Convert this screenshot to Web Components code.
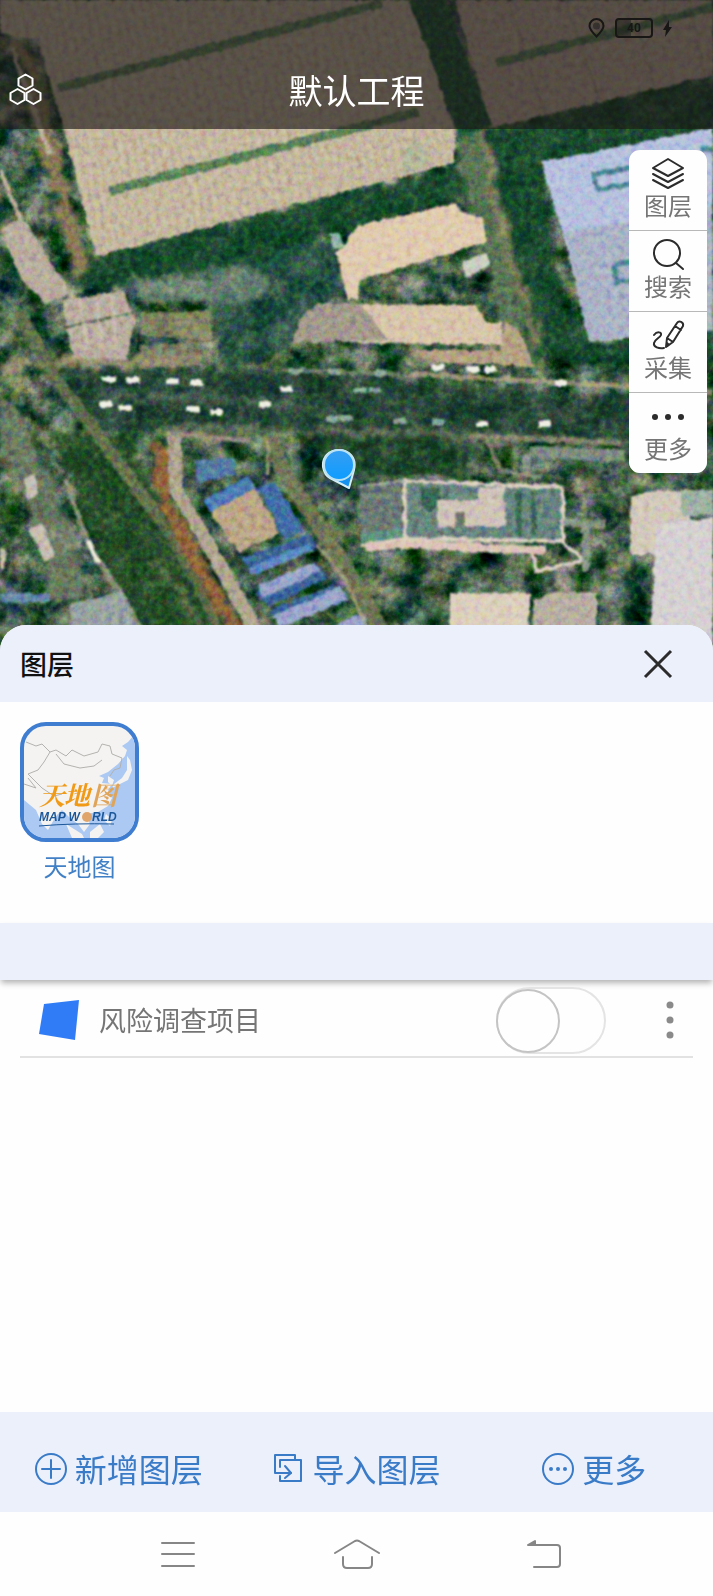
<!DOCTYPE html>
<html lang="zh-CN">
<head>
<meta charset="utf-8">
<meta name="viewport" content="width=device-width, initial-scale=1">
<title>默认工程</title>
<style>
    body {
        margin: 0;
        font-family: "Noto Sans CJK SC", "Noto Sans", sans-serif;
        background: #fefefe;
        color: #757575;
    }
</style>
</head>
<body>
<survey-app>
    <map-view slot="map">
        <title-bar slot="bar">默认工程</title-bar>
        <tool-rail slot="tools">
            <tool-button icon="layers">图层</tool-button>
            <tool-button icon="search">搜索</tool-button>
            <tool-button icon="collect">采集</tool-button>
            <tool-button icon="more">更多</tool-button>
        </tool-rail>
    </map-view>
    <layer-sheet heading="图层">
        <base-map slot="base">天地图</base-map>
        <layer-row>风险调查项目</layer-row>
        <sheet-action slot="actions" icon="add">新增图层</sheet-action>
        <sheet-action slot="actions" icon="import">导入图层</sheet-action>
        <sheet-action slot="actions" icon="dots">更多</sheet-action>
    </layer-sheet>
    <system-nav slot="nav"></system-nav>
</survey-app>

<script>
const resetButton = `
    button {
        margin: 0;
        padding: 0;
        border: 0;
        background: none;
        font: inherit;
        color: inherit;
        cursor: pointer;
    }
    svg { display: block; }
`;

const icons = {
    layers: `<path d="M16 2 31 11 16 19 1 11Z M1 17l15 8 15-8 M1 23l15 8 15-8"/>`,
    search: `<circle cx="15" cy="15" r="13"/><path d="M24 25l7 6"/>`,
    collect: `<path d="M25 4 15 19l-1 9 7-5L31 7c1-4-4-6-6-3Z M23 7l6 4 M15 19l6 4 M14 28l1-4 2 2Z"/>
              <path d="M2 16c3-4 8-3 7 0-1 3-6 4-7 8-1 4 5 6 10 5"/>`,
    more: `<g fill="currentColor" stroke="none"><circle cx="3" cy="17" r="3"/><circle cx="16" cy="17" r="3"/><circle cx="29" cy="17" r="3"/></g>`,
    add: `<circle cx="16" cy="16" r="15"/><path d="M16 7v18M7 16h18"/>`,
    import: `<path d="M23 7V2H3v18h16 M8 14V7h21v21H8v-5"/><path d="M13 13l6 7-6 5"/>`,
    dots: `<circle cx="16" cy="16" r="15"/><g fill="currentColor" stroke="none"><circle cx="9" cy="16" r="2"/><circle cx="16" cy="16" r="2"/><circle cx="23" cy="16" r="2"/></g>`
};

function icon(name, width) {
    return `<svg width="32" height="32" viewBox="0 0 32 32" fill="none" stroke="currentColor"
        stroke-width="${width}" stroke-linejoin="round" stroke-linecap="round" overflow="visible" aria-hidden="true">${icons[name]}</svg>`;
}

class SurveyApp extends HTMLElement {
    constructor() {
        super();
        this.attachShadow({ mode: 'open' });
        this.shadowRoot.innerHTML = `
            <style>
                :host {
                    display: flex;
                    flex-direction: column;
                    min-height: 100vh;
                }
            </style>
            <slot name="map"></slot>
            <slot></slot>
            <slot name="nav"></slot>
        `;
    }
}

// cars on the main road: x, y
const cars = [[109, 379], [133, 380], [172, 381], [196, 383], [286, 389], [125, 408], [193, 409], [105, 404],
    [264, 404], [216, 412], [437, 367], [473, 369], [490, 369], [482, 424], [544, 424], [560, 383]];
const dimCars = [[360, 390], [374, 390], [438, 422], [345, 418], [332, 419], [400, 421], [380, 373], [334, 372], [296, 371]];

class MapView extends HTMLElement {
    constructor() {
        super();
        this.attachShadow({ mode: 'open' });
        const carRects = (list) => list.map(([x, y]) => `<rect x="${x - 6}" y="${y - 3}" width="13" height="6" rx="2"/>`).join('');
        this.shadowRoot.innerHTML = `
            <style>
                :host {
                    display: grid;
                    background: #23533a;
                    overflow: hidden;
                }
                /* imagery and controls share one grid cell */
                .imagery, .controls { grid-area: 1 / 1; min-width: 0; }
                .imagery {
                    display: block;
                    width: 100%;
                    height: 100%;
                    min-height: 650px;
                    contain: size;
                    color-interpolation-filters: sRGB;
                }
                .controls { position: relative; }
                .tools { display: flex; justify-content: flex-end; padding: 21px 6px 177px; }
                .pin { position: absolute; left: 45%; top: 448px; }
            </style>
            <svg class="imagery" viewBox="0 0 713 650" preserveAspectRatio="xMidYMin slice" role="img" aria-label="卫星影像">
                <defs>
                    <filter id="rough" x="0" y="0" width="100%" height="100%">
                        <feTurbulence type="fractalNoise" baseFrequency="0.12" numOctaves="3" seed="4"/>
                        <feDisplacementMap in="SourceGraphic" scale="5" xChannelSelector="R" yChannelSelector="G"/>
                        <feGaussianBlur stdDeviation="1"/>
                    </filter>
                    <filter id="ragged" x="0" y="0" width="100%" height="100%">
                        <feTurbulence type="fractalNoise" baseFrequency="0.06" numOctaves="4" seed="9"/>
                        <feDisplacementMap in="SourceGraphic" scale="22" xChannelSelector="R" yChannelSelector="G"/>
                        <feGaussianBlur stdDeviation="2"/>
                    </filter>
                    <filter id="trees" x="0" y="0" width="100%" height="100%">
                        <feTurbulence type="fractalNoise" baseFrequency="0.04" numOctaves="5" seed="11"/>
                        <feColorMatrix values="1.1 0 0 0 -0.3  0.8 0.2 0 0 -0.14  0.8 0 0.3 0 -0.28  0 0 0 0 1"/>
                    </filter>
                    <filter id="grain" x="0" y="0" width="100%" height="100%">
                        <feTurbulence type="fractalNoise" baseFrequency="0.16" numOctaves="3" seed="7"/>
                        <feColorMatrix values="1.5 0.3 0 0 -0.4  0.3 1.5 0 0 -0.4  0.3 0 1.5 0 -0.4  0 0 0 0 1"/>
                    </filter>
                    <pattern id="ribs" width="9" height="30" patternUnits="userSpaceOnUse" patternTransform="rotate(-12)">
                        <rect width="9" height="30" fill="#c7baa3"/>
                        <rect width="3" height="30" fill="#bfb198"/>
                    </pattern>
                </defs>
                <rect width="713" height="650" filter="url(#trees)"/>
                <g filter="url(#ragged)">
                    <path fill="#0f4527" opacity=".8" d="M70 262 96 256 455 165 475 195 320 238 290 265 80 290Z M490 128 713 75V140L541 162 560 300 590 345 713 330V370L530 360 510 260Z"/>
                    <path fill="#1d4f45" opacity=".6" d="M215 300 290 240 335 240 340 290 290 350 225 370Z"/>
                    <path fill="#7e9585" opacity=".6" d="M130 280 240 262 270 280 260 300 150 304Z"/>
                    <path fill="#1d3f31" opacity=".7" d="M60 368 290 372 713 405V450L400 434 90 430Z"/>
                    <path fill="#163d22" opacity=".7" d="M300 434H470V475H340Z"/>
                    <path fill="#1f4a22" opacity=".8" d="M50 430 130 436 180 560 235 650H160L95 550Z"/>
                    <path fill="none" stroke="#78836a" stroke-width="34" opacity=".8" d="M0 405 32 480 60 550 70 600"/>
                    <path fill="none" stroke="#8b7b57" stroke-width="15" d="M20 40 50 150 82 270"/>
                    <path fill="none" stroke="#5b7655" stroke-width="24" opacity=".9" d="M468 120 484 220 525 370"/>
                    <path fill="none" stroke="#8d8764" stroke-width="8" opacity=".8" d="M482 130 502 235 540 350"/>
                    <path fill="none" stroke="#ab9a78" stroke-width="10" opacity=".8" d="M0 365 65 362 215 358"/>
                    <path fill="none" stroke="#67766c" stroke-width="8" opacity=".5" d="M90 394 300 404"/>
                    <path fill="none" stroke="#7d8468" stroke-width="5" opacity=".7" d="M160 427 460 434 713 446"/>
                    <path fill="none" stroke="#92653a" stroke-width="16" d="M158 441 166 504 199 567 248 650"/>
                    <path fill="none" stroke="#6f7a4f" stroke-width="10" opacity=".7" d="M150 560 180 590 214 650"/>
                </g>
                <g filter="url(#rough)">
                    <path fill="url(#ribs)" d="M0 0H411L455 130V163L96 256 64 130 38 40 0 34Z"/>
                    <path fill="#a9b596" opacity=".6" d="M400 150 420 140 430 165 405 172Z"/>
                    <path fill="#bcab98" d="M455 0H713V75L490 128Z"/>
                    <path stroke="#a39584" stroke-width="2" d="M510 5 545 115M565 0 600 100M630 0 655 88M690 0 704 75"/>
                    <path stroke="#4f7d52" stroke-width="9" opacity=".9" d="M59 88 382 3M109 191 418 112M496 63 713 7"/>
                    <path stroke="#185030" stroke-width="34" d="M425-5 476 132"/>
                    <path fill="none" stroke="#bdb29d" stroke-width="5" d="M12 48 50 155M0 170 30 240 75 300"/>
                    <path fill="#b9ad9f" d="M0 228 23 218 70 292 46 304 20 278Z"/>
                    <path fill="#b9ac9f" d="M62 300 123 291 135 318 127 360 73 358 65 320Z"/>
                    <path stroke="#456044" stroke-width="2" d="M64 328 134 312"/>
                    <path stroke="#cdc3b5" stroke-width="4" opacity=".7" d="M80 300 88 350M96 297 102 350M112 295 116 350"/>
                    <path fill="#93906c" opacity=".8" d="M140 313 210 310 212 340 140 336Z"/>
                    <path fill="#a1957c" opacity=".6" d="M140 345 200 342 204 366 140 368Z"/>
                    <path fill="#e0cbb0" d="M336 253 345 244 356 226 455 203 462 213 482 217 487 242 360 280 358 300 348 300Z"/>
                    <path fill="#8fb6ac" d="M328 234 338 232 344 246 334 250Z"/>
                    <path fill="#d8c5ab" d="M345 304 477 305 486 322 502 322 502 345 350 343Z"/>
                    <path fill="#a39a8c" d="M318 303 360 303 388 340 291 343 300 318Z"/>
                    <path fill="#b5a283" d="M410 350 500 350 504 322 520 330 534 367 430 362Z"/>
                    <path fill="#cbcfc2" d="M462 262 484 253 490 264 466 277Z"/>
                    <path fill="#b6c1de" d="M541 162 713 128V330L589 342 565 240Z"/>
                    <path fill="#abb3c6" d="M565 232 713 207V330L589 342Z"/>
                    <path fill="none" stroke="#4c8793" stroke-width="5" d="M592 175 640 166M597 190 640 182M594 175 597 190M615 265 640 260M614 265 617 282 640 278M701 150 713 148"/>
                    <path fill="none" stroke="#b1a385" stroke-width="5" opacity=".8" d="M410 374 550 382 713 392"/>
                    <path fill="none" stroke="#8b9482" stroke-width="4" opacity=".7" d="M280 370 400 374"/>

                    <path fill="none" stroke="#66734f" stroke-width="13" opacity=".9" d="M18 310 52 375 95 430 160 520"/>
                    <path fill="none" stroke="#67744e" stroke-width="9" opacity=".7" d="M95 430 160 520 200 590 228 650"/>
                    <path fill="none" stroke="#92927a" stroke-width="5" opacity=".9" d="M66 480 88 545 122 595 152 650"/>
                    <path fill="none" stroke="#b0a690" stroke-width="14" d="M174 432 176 490 209 545 266 650"/>
                    <path fill="none" stroke="#9a907b" stroke-width="5" d="M170 433 250 441"/>
                    <path fill="#547da3" d="M195 460 235 458 237 475 197 482Z"/>
                    <path fill="#4c7bb7" d="M203 500 248 476 260 492 210 512Z"/>
                    <path fill="#406fa8" d="M258 487 275 482 304 530 285 540Z"/>
                    <path fill="#bca688" d="M210 512 255 488 281 533 240 552 228 538Z"/>
                    <path fill="#3a6499" d="M242 558 308 534 317 546 252 575Z M256 593 320 567 328 578 268 607Z M270 610 335 584 346 600 280 626Z"/>
                    <path fill="#5c8ac3" d="M248 568 308 544 313 550 252 576Z"/>
                    <path fill="#9ba6cb" d="M258 586 314 562 320 571 264 598Z M272 616 340 586 348 600 280 628Z M325 630 365 612 375 650 330 650Z"/>
                    <path fill="none" stroke="#747a57" stroke-width="15" opacity=".9" d="M270 436 282 470 325 535 360 590 392 650"/>
                    <path fill="none" stroke="#aea384" stroke-width="4" opacity=".8" d="M267 440 268 475M318 545 345 580 378 650"/>

                    <path fill="#6c7b75" d="M360 487 403 482V535L360 544Z"/>
                    <path fill="#5f9480" d="M360 535 403 527V538L360 545Z"/>
                    <path fill="#68857f" d="M405 482 562 487V540H405Z"/>
                    <path fill="#2d6247" opacity=".8" d="M420 488H440V500L430 515 422 505Z M515 492 517 535H522V490Z M530 492 532 535H536V492Z"/>
                    <path fill="#cfc3b8" d="M437 500H505V527H437Z M478 488 506 487 502 500H478Z"/>
                    <path fill="#6f7468" d="M456 512H464V527H454Z"/>
                    <path fill="none" stroke="#dccfc2" stroke-width="4" d="M405 481 563 487V541L405 539ZM405 539 360 546M562 542 584 560 536 571 533 555"/>
                    <path fill="none" stroke="#a9b0a2" stroke-width="2" d="M360 486 405 481"/>
                    <path fill="none" stroke="#dcc5b8" stroke-width="9" d="M365 547 405 544 545 551"/>
                    <path fill="none" stroke="#8d9b8b" stroke-width="8" opacity=".9" d="M563 522 605 524M586 525V572M526 476V455"/>
                    <path fill="none" stroke="#8f9a90" stroke-width="12" opacity=".8" d="M530 452 625 456"/>
                    <path fill="none" stroke="#a49880" stroke-width="5" opacity=".7" d="M470 436 620 443M487 440 500 470 540 478"/>
                    <path fill="#dccfbd" d="M450 593H530V650H450Z"/>
                    <path fill="#b8afa2" d="M533 600 555 592 597 592V650H533Z"/>
                    <path fill="#d3c9bb" d="M630 497 655 490 690 492V555H630Z"/>
                    <path fill="#d6d1d2" d="M656 524 713 518V650H650Z"/>
                    <path fill="#9fb3a4" d="M680 490H713V515L682 516Z"/>
                    <path fill="#97a2a1" d="M70 605 122 590 142 640H72Z"/>
                    <path fill="#6689a8" d="M0 593 50 594V602L0 603Z"/>
                    <path fill="#c7bdb2" d="M24 480 34 474 38 495 28 500Z M28 530 42 522 55 556 45 562Z M0 548 6 550 5 570H0Z"/>
                    <path fill="none" stroke="#eee9dd" stroke-width="5" d="M88 540 98 562"/>
                    <g fill="#eeeee2">${carRects(cars)}</g>
                    <g fill="#8fa99a">${carRects(dimCars)}</g>
                </g>
                <rect width="713" height="650" filter="url(#grain)" opacity=".5" style="mix-blend-mode: soft-light"/>
            </svg>
            <div class="controls">
                <slot name="bar"></slot>
                <div class="tools"><slot name="tools"></slot></div>
                <svg class="pin" width="36" height="42" viewBox="0 0 36 42" role="img" aria-label="当前位置">
                    <defs><linearGradient id="sky" x2="0" y2="1"><stop stop-color="#379df2"/><stop offset="1" stop-color="#0d9dff"/></linearGradient></defs>
                    <path fill="#1691ee" stroke="#d5edf5" stroke-width="2" stroke-linejoin="round" d="M9 30 28 40 33 22C36 10 28 2 18 2 8 2 1 9 2 19c1 5 3 9 7 11Z"/>
                    <circle cx="18" cy="17" r="15" fill="url(#sky)" stroke="#b9e2f5" stroke-width="2"/>
                </svg>
            </div>
        `;
    }
}

class TitleBar extends HTMLElement {
    constructor() {
        super();
        this.attachShadow({ mode: 'open' });
        this.shadowRoot.innerHTML = `
            <style>
                ${resetButton}
                :host {
                    display: block;
                    background: rgba(28, 24, 22, .64);
                    color: #fff;
                }
                .status {
                    display: flex;
                    justify-content: flex-end;
                    align-items: center;
                    gap: 10px;
                    height: 56px;
                    padding-right: 41px;
                    box-sizing: border-box;
                    color: #181715;
                }
                .battery {
                    display: flex;
                    align-items: center;
                    justify-content: center;
                    width: 38px;
                    height: 20px;
                    box-sizing: border-box;
                    border: 2px solid;
                    border-radius: 4px;
                    background: linear-gradient(90deg, rgba(20, 20, 18, .4) 40%, transparent 40%);
                    font: bold 12px Roboto, sans-serif;
                }
                .bar {
                    display: grid;
                    grid-template-columns: 48px 1fr 48px;
                    align-items: center;
                    height: 73px;
                    padding-bottom: 6px;
                    box-sizing: border-box;
                }
                button { padding-left: 9px; }
                h1 {
                    margin: 0;
                    text-align: center;
                    font-size: 34px;
                    line-height: 40px;
                    font-weight: 400;
                }
            </style>
            <div class="status">
                <svg width="17" height="20" viewBox="0 0 17 20" fill="none" stroke="currentColor" stroke-width="2" aria-hidden="true">
                    <path d="M8.500 18.500C4 14 1.500 11 1.500 8a7 7 0 0 1 14 0c0 3-2.500 6-7 10.500Z"/>
                    <circle cx="8.500" cy="8" r="2.500" fill="currentColor" opacity=".5"/>
                </svg>
                <span class="battery">40</span>
                <svg width="9" height="17" viewBox="0 0 9 17" fill="currentColor" aria-hidden="true"><path d="M6 0 0 10h3L2 17 9 7H6Z"/></svg>
            </div>
            <div class="bar">
                <button type="button" aria-label="工程">
                    <svg width="33" height="33" viewBox="0 0 33 33" fill="none" stroke="currentColor" stroke-width="2" stroke-linejoin="round">
                        <path d="M16.500 1.500 23.500 5.500V12.500L16.500 16.500 9.500 12.500V5.500Z"/>
                        <path d="M8.500 16 15.500 20V27L8.500 31 1.500 27V20Z"/>
                        <path d="M24.500 16 31.500 20V27L24.500 31 17.500 27V20Z"/>
                    </svg>
                </button>
                <h1><slot></slot></h1>
            </div>
        `;
    }
}

class ToolRail extends HTMLElement {
    constructor() {
        super();
        this.attachShadow({ mode: 'open' });
        this.shadowRoot.innerHTML = `
            <style>
                :host {
                    display: flex;
                    flex-direction: column;
                    gap: 1px;
                    width: 78px;
                    border-radius: 11px;
                    overflow: hidden;
                    background: #b8b8b8;
                }
            </style>
            <slot></slot>
        `;
    }
}

class ToolButton extends HTMLElement {
    constructor() {
        super();
        this.attachShadow({ mode: 'open' });
        this.shadowRoot.innerHTML = `
            <style>
                ${resetButton}
                :host { display: block; background: #fefefe; }
                button {
                    display: flex;
                    flex-direction: column;
                    align-items: center;
                    width: 100%;
                    height: 80px;
                    padding-top: 7px;
                    box-sizing: border-box;
                    font-size: 24px;
                    line-height: 32px;
                }
                svg { color: #2c2c2c; }
            </style>
            <button type="button">${icon(this.getAttribute('icon'), 2)}<span><slot></slot></span></button>
        `;
    }
}

class LayerSheet extends HTMLElement {
    constructor() {
        super();
        this.attachShadow({ mode: 'open' });
        this.shadowRoot.innerHTML = `
            <style>
                ${resetButton}
                :host {
                    display: flex;
                    flex-direction: column;
                    flex: 1;
                    margin-top: -25px;
                    position: relative;
                    border-radius: 26px 26px 0 0;
                    overflow: hidden;
                    background: #fefefe;
                }
                header {
                    display: flex;
                    justify-content: space-between;
                    align-items: center;
                    height: 77px;
                    padding: 0 40px 0 20px;
                    background: #ebf0fb;
                }
                h2 {
                    margin: 0;
                    font-size: 27px;
                    line-height: 40px;
                    font-weight: 500;
                    color: #111;
                }
                .bases { display: flex; gap: 24px; padding: 20px 20px 41px; }
                .strip { height: 57px; background: #ebf0fb; box-shadow: 0 4px 6px -1px rgba(0, 0, 0, .3); }
                .list { flex: 1; padding: 0 20px; }
                footer {
                    display: grid;
                    grid-template-columns: repeat(3, 1fr);
                    align-items: center;
                    height: 100px;
                    padding-top: 14px;
                    box-sizing: border-box;
                    background: #ebf0fb;
                }
            </style>
            <header>
                <h2>${this.getAttribute('heading')}</h2>
                <button type="button" aria-label="关闭">
                    <svg width="30" height="30" viewBox="0 0 30 30" stroke="#2b2b2b" stroke-width="3"><path d="M2 2 28 28M28 2 2 28"/></svg>
                </button>
            </header>
            <div class="bases"><slot name="base"></slot></div>
            <div class="strip"></div>
            <div class="list"><slot></slot></div>
            <footer><slot name="actions"></slot></footer>
        `;
    }
}

class BaseMap extends HTMLElement {
    constructor() {
        super();
        this.attachShadow({ mode: 'open' });
        this.shadowRoot.innerHTML = `
            <style>
                ${resetButton}
                :host { display: block; color: #4280c6; }
                button {
                    display: flex;
                    flex-direction: column;
                    align-items: center;
                    gap: 8px;
                    font-size: 24px;
                    line-height: 32px;
                }
                .thumb {
                    border: 4px solid #3f7dd0;
                    border-radius: 26px;
                    overflow: hidden;
                    background: #f4f3f2;
                }
                .name { font: italic bold 26px "Noto Serif CJK SC", "Noto Sans CJK SC", serif; }
                .brand { font: italic bold 12px "Liberation Sans", sans-serif; }
            </style>
            <button type="button" aria-pressed="true">
                <span class="thumb">
                    <svg width="111" height="112" viewBox="0 0 111 112">
                        <path fill="#abc9f3" d="M111 8 104 16 98 20 103 24 101 30 94 38 84 46 75 50 80 52 78 57 88 58 84 64 88 72 84 80 74 86 62 88 66 98 60 106 54 98 46 92 38 84 32 90 24 104 18 98 12 84 0 74V112H111Z"/>
                        <path fill="#f4f3f2" d="M103 30 106 34 108 44 104 54 96 58 88 62 90 58 98 52 103 44Z M84 50 90 54 88 60 84 56Z"/>
                        <path fill="#f4f3f2" d="M42 98 58 108 60 112H48Z M66 106 76 98 80 106 74 112H66Z M82 88 88 94 86 100 80 94Z"/>
                        <path fill="none" stroke="#b4b2ae" stroke-width="1" d="M2 16 12 20 18 18 26 26 32 24 42 30 48 24 60 30 74 26 78 18 86 20 88 28 98 32 96 42 90 44 86 50 M32 28 40 38 56 42 70 40 78 34 M26 26 20 36 14 44 4 48 10 54 18 62 30 70 38 68 M0 58 12 62 4 52"/>
                        <g fill="#f09a16" class="name"><text x="15" y="79">天</text><text x="40" y="79">地</text><text x="67" y="79" fill="#dfa457">图</text></g>
                        <g fill="#1c5799" class="brand"><text x="15" y="95">MAP W</text><text x="68" y="95">RLD</text></g>
                        <circle cx="63" cy="91" r="5" fill="#e0a56b"/>
                        <path fill="none" stroke="#1c5799" stroke-width="1" d="M15 100Q50 97 90 98"/>
                    </svg>
                </span>
                <span><slot></slot></span>
            </button>
        `;
    }
}

class LayerRow extends HTMLElement {
    constructor() {
        super();
        this.attachShadow({ mode: 'open' });
        this.shadowRoot.innerHTML = `
            <style>
                ${resetButton}
                :host {
                    display: flex;
                    align-items: center;
                    height: 78px;
                    padding: 4px 0 0 19px;
                    border-bottom: 2px solid #e2e2e2;
                    box-sizing: border-box;
                }
                label {
                    flex: 1;
                    margin-left: 20px;
                    font-size: 27px;
                    line-height: 40px;
                }
                input {
                    appearance: none;
                    width: 110px;
                    height: 67px;
                    margin: 0 59px 0 0;
                    border: 2px solid #e4e4e4;
                    border-radius: 34px;
                    background: #fefefe;
                }
                input::before {
                    content: "";
                    display: block;
                    width: 64px;
                    height: 64px;
                    margin: 0 -2px;
                    box-sizing: border-box;
                    border: 2px solid #c4c4c4;
                    border-radius: 50%;
                    background: #fefefe;
                }
                input:checked::before { margin-left: auto; }
                button { margin-right: 18px; }
            </style>
            <svg width="40" height="40" viewBox="0 0 40 40" aria-hidden="true"><path fill="#2f7cf6" d="M5 4 40 0 36 40 0 34Z"/></svg>
            <label for="visible"><slot></slot></label>
            <input id="visible" type="checkbox" role="switch">
            <button type="button" aria-label="图层选项">
                <svg width="10" height="40" viewBox="0 0 10 40" fill="#8a8a8a"><circle cx="5" cy="5" r="3.500"/><circle cx="5" cy="20" r="3.500"/><circle cx="5" cy="35" r="3.500"/></svg>
            </button>
        `;
    }
}

class SheetAction extends HTMLElement {
    constructor() {
        super();
        this.attachShadow({ mode: 'open' });
        this.shadowRoot.innerHTML = `
            <style>
                ${resetButton}
                :host { display: flex; justify-content: center; color: #3a7bc8; }
                button {
                    display: flex;
                    align-items: center;
                    gap: 8px;
                    font-size: 32px;
                    line-height: 40px;
                }
                span { padding-bottom: 2px; }
            </style>
            <button type="button">${icon(this.getAttribute('icon'), 2)}<span><slot></slot></span></button>
        `;
    }
}

class SystemNav extends HTMLElement {
    constructor() {
        super();
        this.attachShadow({ mode: 'open' });
        this.shadowRoot.innerHTML = `
            <style>
                ${resetButton}
                :host {
                    display: grid;
                    grid-template-columns: repeat(3, 1fr);
                    justify-items: center;
                    align-items: center;
                    height: 84px;
                    padding: 0 12.5%;
                    box-sizing: border-box;
                    background: #fefefe;
                }
                svg { fill: none; stroke: #868686; stroke-width: 2; stroke-linecap: round; stroke-linejoin: round; }
            </style>
            <button type="button" aria-label="任务"><svg width="64" height="32" viewBox="0 0 64 32"><path d="M16 5H48M16 16H48M16 28H48"/></svg></button>
            <button type="button" aria-label="主页"><svg width="64" height="32" viewBox="0 0 64 32"><path d="M10 15 30 3Q32 2 34 3L54 15M18 19V26Q18 30 22 30H43Q47 30 47 26V19"/></svg></button>
            <button type="button" aria-label="返回"><svg width="64" height="32" viewBox="0 0 64 32"><path d="M26 7H54Q57 7 57 10V26Q57 29 54 29H31"/><path d="M25 7 32 3V7Z" fill="#868686"/></svg></button>
        `;
    }
}

customElements.define('survey-app', SurveyApp);
customElements.define('map-view', MapView);
customElements.define('title-bar', TitleBar);
customElements.define('tool-rail', ToolRail);
customElements.define('tool-button', ToolButton);
customElements.define('layer-sheet', LayerSheet);
customElements.define('base-map', BaseMap);
customElements.define('layer-row', LayerRow);
customElements.define('sheet-action', SheetAction);
customElements.define('system-nav', SystemNav);
</script>
</body>
</html>
